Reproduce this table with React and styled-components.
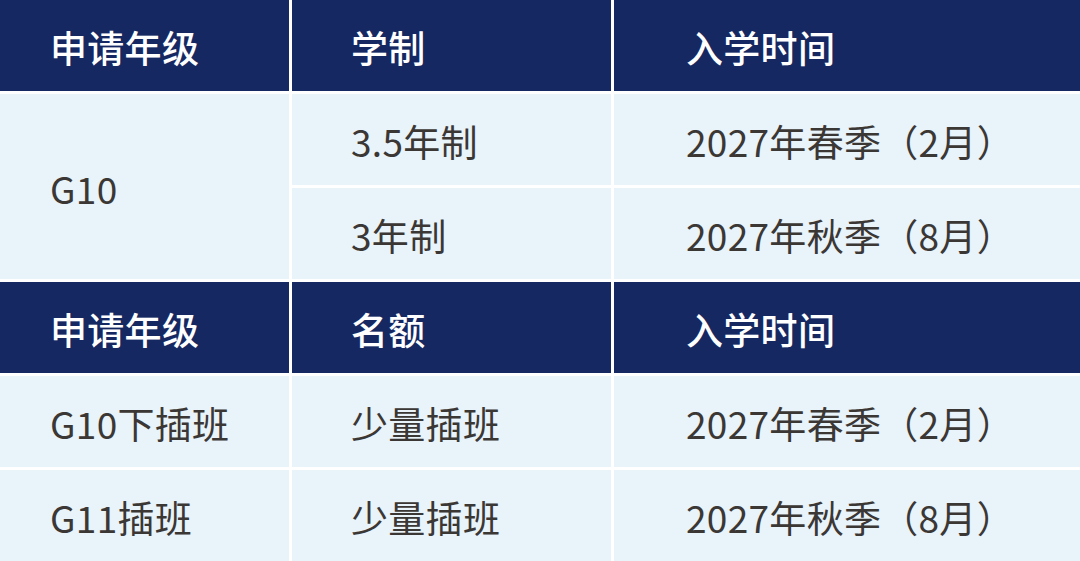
import React from 'react';
import styled, { createGlobalStyle } from 'styled-components';

const GlobalStyle = createGlobalStyle`
  html, body {
    margin: 0;
    padding: 0;
    background: #ffffff;
  }
  body {
    font-family: "Noto Sans CJK SC", "Noto Sans", sans-serif;
  }
`;

const Table = styled.div`
  display: grid;
  grid-template-columns: 289px 319px 1fr;
  grid-auto-rows: 91px;
  gap: 3px;
  width: 1080px;
  height: 561px;
  background: #ffffff;
`;

const Cell = styled.div`
  display: flex;
  align-items: center;
  padding-left: ${(p) => p.$pad}px;
  padding-top: 4px;
  box-sizing: border-box;
  font-size: 37px;
  letter-spacing: 0.3px;
  line-height: 1;
  white-space: nowrap;
  background: ${(p) => (p.$head ? '#162862' : '#e8f3fa')};
  color: ${(p) => (p.$head ? '#ffffff' : '#3b3735')};
  font-weight: ${(p) => (p.$head ? 500 : 400)};
  grid-row: ${(p) => (p.$span ? `span ${p.$span}` : 'auto')};
`;

const pads = [50, 59, 72];

const sections = [
  {
    head: ['申请年级', '学制', '入学时间'],
    rows: [
      ['G10', '3.5年制', '2027年春季（2月）'],
      [null, '3年制', '2027年秋季（8月）'],
    ],
  },
  {
    head: ['申请年级', '名额', '入学时间'],
    rows: [
      ['G10下插班', '少量插班', '2027年春季（2月）'],
      ['G11插班', '少量插班', '2027年秋季（8月）'],
    ],
  },
];

export default function App() {
  return (
    <>
      <GlobalStyle />
      <Table>
        {sections.map((s, si) => (
          <React.Fragment key={si}>
            {s.head.map((h, i) => (
              <Cell key={'h' + i} $head $pad={pads[i]}>
                {h}
              </Cell>
            ))}
            {s.rows.map((r, ri) =>
              r.map((c, ci) => {
                if (c === null) return null;
                // G10 spans both rows in the first section
                const span = si === 0 && ri === 0 && ci === 0 ? 2 : 0;
                return (
                  <Cell key={ri + '-' + ci} $pad={pads[ci]} $span={span}>
                    {c}
                  </Cell>
                );
              })
            )}
          </React.Fragment>
        ))}
      </Table>
    </>
  );
}
